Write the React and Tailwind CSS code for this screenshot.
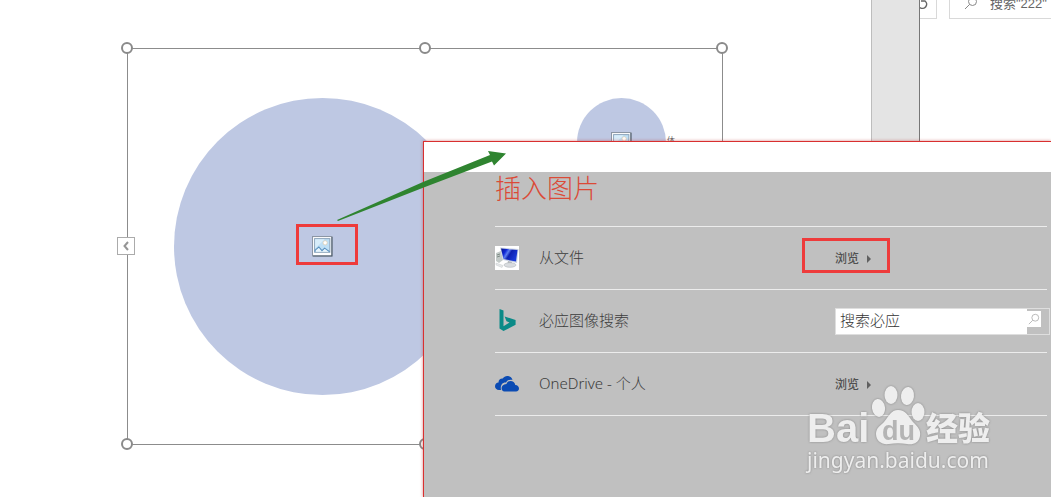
import React from 'react';

function Handle({ className }) {
  return <span className={`absolute size-3 rounded-full border-2 border-[#8a8a8a] bg-white ${className}`} />;
}

function PictureIcon() {
  return (
    <svg viewBox="0 0 20 20" className="size-[21px]" aria-hidden="true">
      <rect x="0.5" y="0.5" width="18.500" height="18.500" fill="#fff" stroke="#8c96a4" />
      <path d="M19 1v18H1" fill="none" stroke="#4d5c6b" />
      <rect x="2.5" y="2.5" width="14.500" height="13" fill="#bfe0f6" stroke="#8ea5bb" />
      <path d="M3 12L12 3H3z" fill="#d8edfa" />
      <circle cx="12.5" cy="6.5" r="2" fill="#fff" stroke="#e3c9a5" strokeWidth="0.6" />
      <path d="M3 15v-1.500l3.500-3 3 3.500 2.500-2.500 2 1.500 2.800 2" fill="#e9f5fc" stroke="#5a90be" strokeWidth="1" />
    </svg>
  );
}

function ComputerIcon() {
  return (
    <svg viewBox="0 0 24 24" className="size-6" aria-hidden="true">
      <defs>
        <linearGradient id="screen" x1="0" y1="0" x2="1" y2="0.5">
          <stop offset="0" stopColor="#0a1580" />
          <stop offset="0.3" stopColor="#1028d8" />
          <stop offset="0.45" stopColor="#5c7df0" />
          <stop offset="0.6" stopColor="#0d1fb0" />
          <stop offset="1" stopColor="#1a3ad8" />
        </linearGradient>
      </defs>
      <path fill="#fff" d="M0 0h24v24H0z" />
      <path d="M1 7l5-2 2 9-4 3-3-2z" fill="#c3cac8" />
      <path d="M2 9l3-1M2 11l3-1" stroke="#7d8a84" />
      <path d="M5 1.500L23.500 3 22 17 8 14z" fill="#c9d2e4" />
      <path d="M6 2.500L22.500 4 21 15.500 8.500 13z" fill="url(#screen)" />
      <path d="M13 15l4 1-1 3h-4z" fill="#aeb4b9" />
      <ellipse cx="15" cy="19" rx="6" ry="2.300" fill="#d9dcdf" stroke="#b4b9bd" strokeWidth="0.6" />
      <path d="M1 17l7 2.500-1 2-6-2.500z" fill="#e6e8ea" stroke="#c6cacc" strokeWidth="0.5" />
    </svg>
  );
}

function BingIcon() {
  return (
    <svg viewBox="0 0 24 24" className="size-6" aria-hidden="true">
      <path d="M4.500 0l4 1.600v15.600l6-3.600-3-1.400-1.900-4.800 11 3.700v4.700L8.500 22 4.500 19.500z" fill="#0b8a87" />
    </svg>
  );
}

function OneDriveIcon() {
  return (
    <svg viewBox="0 0 24 24" className="size-6" aria-hidden="true">
      <path d="M6 18H4C1.500 18 0 16.300 0 14.300 0 12 1.700 10.700 3.500 10.600 3.500 7.800 5.500 6.300 7.700 6.500 9 4.500 11 3.700 13 4c2.400.3 4 2 4.500 4-3-.8-5.300.3-6.500 2.500-3.400-.5-6 2.500-5 7.500z" fill="#0b4bb3" />
      <path d="M9.500 19.500c-4 0-4.400-7.200 2-7.400C12 8 19.500 7.500 20.300 13c4.900.2 4.700 6.500.7 6.500z" fill="#0b4bb3" />
    </svg>
  );
}

function Magnifier({ className }) {
  return (
    <svg viewBox="0 0 14 14" className={className} fill="none" stroke="currentColor" aria-hidden="true">
      <circle cx="8.500" cy="5.500" r="4" />
      <path d="M5.500 8.500L1 13" />
    </svg>
  );
}

function BrowseButton() {
  return (
    <button type="button" className="flex items-center gap-2 pt-0.5 text-[12px] leading-5 font-medium text-[#505050]">
      浏览
      <svg viewBox="0 0 4 8" className="h-2 w-1" aria-hidden="true"><path d="M0 0l4 4-4 4z" fill="#606060" /></svg>
    </button>
  );
}

function SourceRow({ icon, label, children }) {
  return (
    <li className="grid h-[63px] grid-cols-[44px_296px_1fr] items-center border-b border-[#ececec]">
      {icon}
      <span className="pb-0.5 text-[15px] leading-5 font-light text-[#3c3c3c]">{label}</span>
      <div className="min-w-0">{children}</div>
    </li>
  );
}

function SmartArtFrame() {
  return (
    <div className="absolute top-12 left-[127px] h-[397px] w-[596px] border border-[#8c8c8c]">
      <div className="absolute top-[49px] left-[46px] flex size-[297px] items-center justify-center rounded-full bg-[#bec8e3]">
        <PictureIcon />
      </div>
      <div className="absolute top-[49px] left-[449px] flex size-[89px] items-center justify-center rounded-full bg-[#bec8e3]">
        <PictureIcon />
      </div>
      <span className="absolute top-[85px] left-[539px] text-[8px] leading-3 text-[#666]">体</span>
      <Handle className="-top-[7px] -left-[7px]" />
      <Handle className="-top-[7px] left-1/2 -translate-x-1/2" />
      <Handle className="-top-[7px] -right-[6px]" />
      <Handle className="-bottom-[6px] -left-[7px]" />
      <Handle className="-bottom-[6px] left-1/2 -translate-x-1/2" />
      <Handle className="-right-[6px] -bottom-[6px]" />
      <button type="button" aria-label="展开" className="absolute top-[188px] -left-[11px] flex h-[18px] w-[18px] items-center justify-center border border-[#ababab] bg-white">
        <svg viewBox="0 0 6 10" className="h-2.5 w-1.5" fill="none" stroke="#959595" strokeWidth="2"><path d="M5 1L1.500 5 5 9" /></svg>
      </button>
    </div>
  );
}

function InsertDialog() {
  return (
    <section className="absolute top-[141px] right-0 bottom-0 left-[423px] flex flex-col border-t border-l border-[#d92f2f] bg-[#c0c0c0] shadow-[0_0_3px_rgba(190,60,60,0.6)]">
      <div className="h-[30px] shrink-0 bg-white" />
      <div className="mr-1 ml-[71px]">
        <h1 className="border-b border-[#ececec] pb-[22px] text-[26px] leading-8 font-light text-[#db4a37]">插入图片</h1>
        <ul>
          <SourceRow icon={<ComputerIcon />} label="从文件"><BrowseButton /></SourceRow>
          <SourceRow icon={<BingIcon />} label="必应图像搜索">
            <form className="-mr-[3px] flex h-[27px] border border-[#dedede]" onSubmit={(e) => e.preventDefault()}>
              <input type="text" aria-label="搜索必应" placeholder="搜索必应" className="min-w-0 flex-1 bg-white pb-0.5 pl-1 text-[15px] font-light text-[#333] outline-none placeholder:text-[#333]" />
              <button type="submit" aria-label="搜索" className="mt-0.5 mr-2 flex h-4 w-3.5 items-center justify-center bg-white text-[#b0b0b0]">
                <Magnifier className="size-3" />
              </button>
            </form>
          </SourceRow>
          <SourceRow icon={<OneDriveIcon />} label="OneDrive - 个人"><BrowseButton /></SourceRow>
        </ul>
      </div>
    </section>
  );
}

function Watermark() {
  return (
    <div className="absolute top-[384px] left-[807px] text-[#eeeeee] drop-shadow-[0_0_1px_rgba(110,110,110,0.7)]">
      <div className="flex h-[64px] items-end">
        <span className="w-[65px] font-['Liberation_Sans',sans-serif] text-[40px] leading-10 font-bold">Bai</span>
        <svg viewBox="0 0 54 64" className="h-[64px] w-[54px]" aria-hidden="true">
          <g fill="currentColor">
            <ellipse cx="19" cy="11" rx="6.500" ry="9" />
            <ellipse cx="35.500" cy="12" rx="6.500" ry="9" transform="rotate(8 35.500 12)" />
            <ellipse cx="6.500" cy="24" rx="6.500" ry="9" transform="rotate(-8 6 24)" />
            <ellipse cx="46" cy="28" rx="6.500" ry="9" />
            <path d="M26 26c8 0 10 6 15 12 5 5 8 8 7 14-1 7-7 9-13 8-6-1-12-1-18 0-7 1-13-3-13-10 0-6 4-8 8-12 5-6 7-12 14-12z" />
          </g>
          <text x="10" y="56" fontSize="27" fontWeight="700" fill="#b4b4b4" fontFamily="Liberation Sans, sans-serif">du</text>
        </svg>
        <span className="text-[32px] leading-10 font-black">经验</span>
      </div>
      <p className="font-['Noto_Sans',sans-serif] text-[21px] leading-6">jingyan.baidu.com</p>
    </div>
  );
}

export default function App() {
  return (
    <main className="relative flex h-screen overflow-hidden bg-white font-['Noto_Sans','Noto_Sans_CJK_SC',sans-serif]">
      <div className="flex-1" />
      <div className="w-[49px] border-r border-l border-r-[#777] border-l-[#bdbdbd] bg-[#e4e4e4]" />
      <div className="flex h-[19px] w-[131px] gap-3">
        <button type="button" aria-label="刷新" className="h-full w-[17px] border-r border-b border-[#d9d9d9] text-[#666]">
          <svg viewBox="0 0 16 18" className="h-[18px] w-4" fill="none" stroke="currentColor" strokeWidth="1.500"><path d="M0 7.500a4 4 0 0 0 5-6.500M1 1h4.500" /></svg>
        </button>
        <label className="flex min-w-0 flex-1 items-start border-b border-l border-[#d9d9d9] pl-3.5 text-[#888]">
          <Magnifier className="-mt-1 size-3.5 shrink-0" />
          <input type="text" aria-label="搜索" placeholder={'搜索"222"'} className="-mt-1.5 ml-3 h-5 w-full min-w-0 bg-transparent font-['Liberation_Sans','Noto_Sans_CJK_SC',sans-serif] text-[13px] leading-5 outline-none placeholder:text-[#666]" />
        </label>
      </div>
      <SmartArtFrame />
      <InsertDialog />
      <div className="absolute top-[224px] left-[296px] h-[41px] w-[62px] border-3 border-[#ee3b3b]" />
      <div className="absolute top-[238px] left-[802px] h-[35px] w-[88px] border-3 border-[#ee3b3b]" />
      <svg viewBox="0 0 170 72" className="pointer-events-none absolute top-[150px] left-[337px] h-[72px] w-[170px]" aria-hidden="true">
        <path d="M0 70L86 32 153 5 151 1l18 2.500L157 15.500l-2-4L88 37 1 71z" fill="#2f8430" />
      </svg>
      <Watermark />
    </main>
  );
}
